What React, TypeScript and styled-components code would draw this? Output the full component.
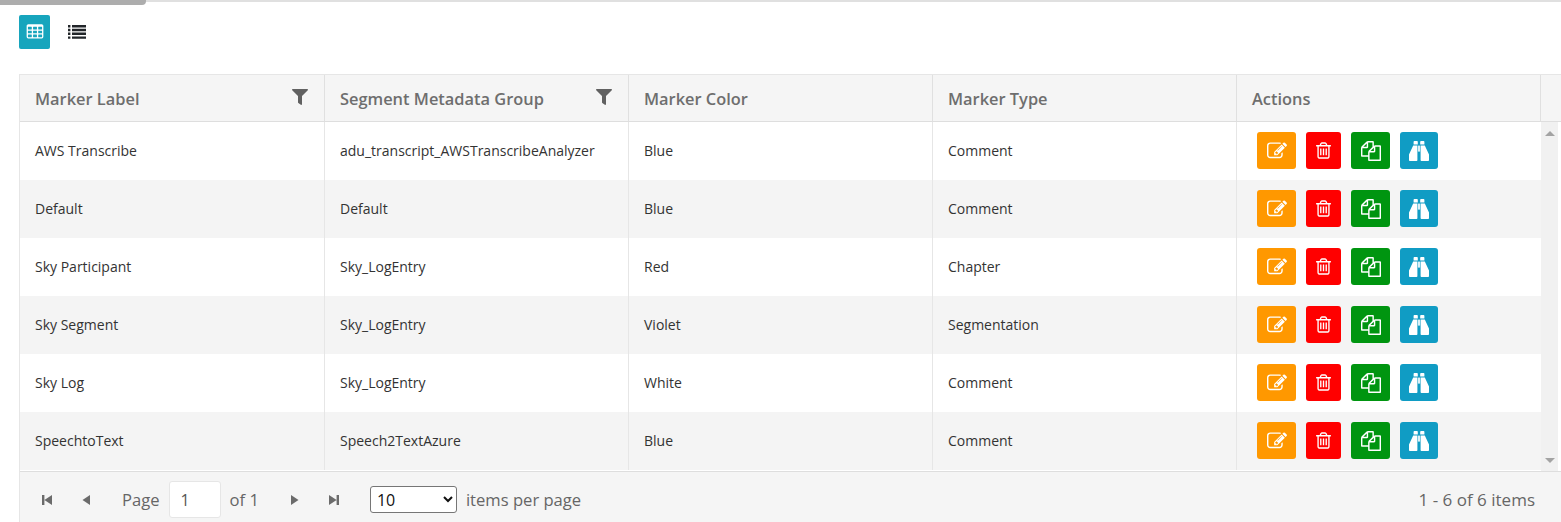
import { createGlobalStyle, styled } from "styled-components";
import { FaFilter } from "react-icons/fa";

interface MarkerRow {
    label: string;
    group: string;
    color: string;
    type: string;
}

const rows: MarkerRow[] = [
    { label: "AWS Transcribe", group: "adu_transcript_AWSTranscribeAnalyzer", color: "Blue", type: "Comment" },
    { label: "Default", group: "Default", color: "Blue", type: "Comment" },
    { label: "Sky Participant", group: "Sky_LogEntry", color: "Red", type: "Chapter" },
    { label: "Sky Segment", group: "Sky_LogEntry", color: "Violet", type: "Segmentation" },
    { label: "Sky Log", group: "Sky_LogEntry", color: "White", type: "Comment" },
    { label: "SpeechtoText", group: "Speech2TextAzure", color: "Blue", type: "Comment" },
];

const icons = {
    edit: "M888 1184l116-116-152-152-116 116v56h96v96h56zm440-720q-16-16-33 1l-350 350q-17 17-1 33t33-1l350-350q17-17 1-33zm80 594v190q0 119-84.5 203.5t-203.5 84.5h-832q-119 0-203.5-84.5t-84.5-203.5v-832q0-119 84.5-203.5t203.5-84.5h832q63 0 117 25 15 7 18 23 3 17-9 29l-49 49q-14 14-32 8-23-6-45-6h-832q-66 0-113 47t-47 113v832q0 66 47 113t113 47h832q66 0 113-47t47-113v-126q0-13 9-22l64-64q15-15 35-7t20 29zm-96-738l288 288-672 672h-288v-288zm444 132l-92 92-288-288 92-92q28-28 68-28t68 28l152 152q28 28 28 68t-28 68z",
    trash: "M704 736v576q0 14-9 23t-23 9h-64q-14 0-23-9t-9-23v-576q0-14 9-23t23-9h64q14 0 23 9t9 23zm256 0v576q0 14-9 23t-23 9h-64q-14 0-23-9t-9-23v-576q0-14 9-23t23-9h64q14 0 23 9t9 23zm256 0v576q0 14-9 23t-23 9h-64q-14 0-23-9t-9-23v-576q0-14 9-23t23-9h64q14 0 23 9t9 23zm128 724v-948h-896v948q0 22 7 40.5t14.5 27 10.5 8.5h832q3 0 10.5-8.5t14.5-27 7-40.5zm-672-1076h448l-48-117q-7-9-17-11h-317q-10 2-17 11zm928 32v64q0 14-9 23t-23 9h-96v948q0 83-47 143.5t-113 60.5h-832q-66 0-113-58.5t-47-141.5v-952h-96q-14 0-23-9t-9-23v-64q0-14 9-23t23-9h309l70-167q15-37 54-63t79-26h320q40 0 79 26t54 63l70 167h309q14 0 23 9t9 23z",
    files: "M1696 384q40 0 68 28t28 68v1216q0 40-28 68t-68 28h-960q-40 0-68-28t-28-68v-288h-544q-40 0-68-28t-28-68v-672q0-40 20-88t48-76l408-408q28-28 76-48t88-20h416q40 0 68 28t28 68v328q68-40 128-40h416zm-544 213l-299 299h299v-299zm-640-384l-299 299h299v-299zm196 647l316-316v-416h-384v416q0 40-28 68t-68 28h-416v640h512v-256q0-40 20-88t48-76zm956 804v-1152h-384v416q0 40-28 68t-68 28h-416v640h896z",
    table: "M576 1376v-192q0-14-9-23t-23-9h-320q-14 0-23 9t-9 23v192q0 14 9 23t23 9h320q14 0 23-9t9-23zm0-384v-192q0-14-9-23t-23-9h-320q-14 0-23 9t-9 23v192q0 14 9 23t23 9h320q14 0 23-9t9-23zm512 384v-192q0-14-9-23t-23-9h-320q-14 0-23 9t-9 23v192q0 14 9 23t23 9h320q14 0 23-9t9-23zm-512-768v-192q0-14-9-23t-23-9h-320q-14 0-23 9t-9 23v192q0 14 9 23t23 9h320q14 0 23-9t9-23zm512 384v-192q0-14-9-23t-23-9h-320q-14 0-23 9t-9 23v192q0 14 9 23t23 9h320q14 0 23-9t9-23zm512 384v-192q0-14-9-23t-23-9h-320q-14 0-23 9t-9 23v192q0 14 9 23t23 9h320q14 0 23-9t9-23zm-512-768v-192q0-14-9-23t-23-9h-320q-14 0-23 9t-9 23v192q0 14 9 23t23 9h320q14 0 23-9t9-23zm512 384v-192q0-14-9-23t-23-9h-320q-14 0-23 9t-9 23v192q0 14 9 23t23 9h320q14 0 23-9t9-23zm0-384v-192q0-14-9-23t-23-9h-320q-14 0-23 9t-9 23v192q0 14 9 23t23 9h320q14 0 23-9t9-23zm128-320v1088q0 66-47 113t-113 47h-1344q-66 0-113-47t-47-113v-1088q0-66 47-113t113-47h1344q66 0 113 47t47 113z",
};

const Glyph = ({ d, size }: { d: string; size: number }) => (
    <svg width={size} height={size} viewBox="0 0 1792 1792" fill="currentColor">
        <path d={d} />
    </svg>
);

const BinocularsIcon = () => (
    <svg width="20" height="20" viewBox="0 0 20 20" fill="currentColor">
        <path d="M4.6 0.8C4.6 0.4 5 0 5.4 0H8C8.4 0 8.8 0.4 8.8 0.8V3.6H4.6ZM11.2 0.8C11.2 0.4 11.6 0 12 0H14.6C15 0 15.4 0.4 15.4 0.8V3.6H11.2Z" />
        <path d="M4.2 4.6H8.4V19.2C8.4 19.6 8 20 7.6 20H0.8C0.4 20 0 19.6 0 19.2V13.6ZM11.6 4.6H15.8L20 13.6V19.2C20 19.6 19.6 20 19.2 20H12.4C12 20 11.6 19.6 11.6 19.2Z" />
        <path d="M8.9 4.6H11.1V10.6H8.9Z" opacity="0.85" />
    </svg>
);

const ListIcon = () => (
    <svg width="18" height="14" viewBox="0 0 18 14" fill="currentColor">
        <path d="M0 0H2.4V2.4H0ZM4 0H18V2.4H4ZM0 3.8H2.4V6.2H0ZM4 3.8H18V6.2H4ZM0 7.6H2.4V10H0ZM4 7.6H18V10H4ZM0 11.4H2.4V13.8H0ZM4 11.4H18V13.8H4Z" />
    </svg>
);

const ActionButtons = () => (
    <Actions>
        <ActionButton $bg="#ff9800" $width={39}><Glyph d={icons.edit} size={20} /></ActionButton>
        <ActionButton $bg="#ff0000" $width={35}><Glyph d={icons.trash} size={19} /></ActionButton>
        <ActionButton $bg="#009510" $width={39}><Glyph d={icons.files} size={20} /></ActionButton>
        <ActionButton $bg="#109cc4" $width={38}><BinocularsIcon /></ActionButton>
    </Actions>
);

export default function App() {
    return (
        <>
            <GlobalStyle />
            <TopLine>
                <TopThumb />
            </TopLine>
            <Page>
                <ViewBar>
                    <ViewButton $active><Glyph d={icons.table} size={18} /></ViewButton>
                    <ViewButton><ListIcon /></ViewButton>
                </ViewBar>
                <Grid>
                    <HeaderRow>
                        <HeaderCell>Marker Label<FilterIcon><FaFilter size={16} /></FilterIcon></HeaderCell>
                        <HeaderCell>Segment Metadata Group<FilterIcon><FaFilter size={16} /></FilterIcon></HeaderCell>
                        <HeaderCell>Marker Color</HeaderCell>
                        <HeaderCell>Marker Type</HeaderCell>
                        <HeaderCell>Actions</HeaderCell>
                        <HeaderSpacer />
                    </HeaderRow>
                    <BodyWrap>
                        <Rows>
                            {rows.map((row, i) => (
                                <Row key={row.label} $alt={i % 2 === 1}>
                                    <Cell>{row.label}</Cell>
                                    <Cell>{row.group}</Cell>
                                    <Cell>{row.color}</Cell>
                                    <Cell>{row.type}</Cell>
                                    <Cell><ActionButtons /></Cell>
                                </Row>
                            ))}
                        </Rows>
                        <ScrollTrack>
                            <ArrowUp />
                            <ArrowDown />
                        </ScrollTrack>
                    </BodyWrap>
                    <Pager>
                        <PagerLeft>
                            <PagerIcons>
                                <PagerGlyph viewBox="0 0 12 12"><path d="M1 1H3.4V11H1ZM11 1V11L3.4 6Z" /></PagerGlyph>
                                <PagerGlyph viewBox="0 0 12 12"><path d="M10 1V11L2.5 6Z" /></PagerGlyph>
                            </PagerIcons>
                            <PagerText>Page</PagerText>
                            <PageInput defaultValue="1" />
                            <PagerText>of 1</PagerText>
                            <PagerIcons>
                                <PagerGlyph viewBox="0 0 12 12"><path d="M2 1V11L9.5 6Z" /></PagerGlyph>
                                <PagerGlyph viewBox="0 0 12 12"><path d="M11 1H8.6V11H11ZM1 1V11L8.6 6Z" /></PagerGlyph>
                            </PagerIcons>
                            <SizeSelect defaultValue="10">
                                <option>10</option>
                                <option>20</option>
                                <option>50</option>
                            </SizeSelect>
                            <PagerText>items per page</PagerText>
                        </PagerLeft>
                        <ItemCount>1 - 6 of 6 items</ItemCount>
                    </Pager>
                </Grid>
            </Page>
        </>
    );
}

const GlobalStyle = createGlobalStyle`
    html, body {
        margin: 0;
        padding: 0;
        height: 522px;
        overflow: hidden;
        background: #fff;
        font-family: "Open Sans", "Liberation Sans", sans-serif;
    }
    * {
        box-sizing: border-box;
    }
`;

const TopLine = styled.div`
    height: 2px;
    background: #e0e0e0;
`;

const TopThumb = styled.div`
    width: 146px;
    height: 5px;
    background: #adadad;
    border-bottom-right-radius: 4px;
`;

const Page = styled.div`
    padding: 13px 0 0 19px;
`;

const ViewBar = styled.div`
    display: flex;
    gap: 11px;
    height: 34px;
    margin-bottom: 25px;
`;

const ViewButton = styled.div<{ $active?: boolean }>`
    width: 31px;
    height: 34px;
    display: flex;
    align-items: center;
    justify-content: center;
    border-radius: 2px;
    background: ${(p) => (p.$active ? "#17a5bd" : "transparent")};
    color: ${(p) => (p.$active ? "#fff" : "#212529")};
`;

const Grid = styled.div`
    border: 1px solid #e6e6e6;
    border-right: none;
    border-bottom: none;
    height: 448px;
    display: flex;
    flex-direction: column;
    color: #333;
`;

const HeaderRow = styled.div`
    display: grid;
    grid-template-columns: 305px 304px 304px 304px 304px 1fr;
    height: 47px;
    background: #f5f5f5;
    border-bottom: 1px solid #dedede;
`;

const HeaderCell = styled.div`
    position: relative;
    display: flex;
    align-items: center;
    padding: 0 15px;
    font-size: 16.4px;
    font-weight: 600;
    color: #6e6e6e;
    border-right: 1px solid #e0e0e0;
`;

const HeaderSpacer = styled.div``;

const FilterIcon = styled.span`
    position: absolute;
    top: 14px;
    right: 16px;
    color: #616161;
    display: flex;
`;

const BodyWrap = styled.div`
    display: flex;
    height: 349px;
`;

const Rows = styled.div`
    width: 1521px;
    flex: none;
`;

const Row = styled.div<{ $alt: boolean }>`
    display: grid;
    grid-template-columns: 305px 304px 304px 304px 304px;
    height: 58px;
    background: ${(p) => (p.$alt ? "#f4f4f4" : "#fff")};
`;

const Cell = styled.div`
    display: flex;
    align-items: center;
    padding: 0 15px 1px;
    font-size: 14px;
    color: #333;
    border-right: 1px solid #e6e6e6;

    &:last-child {
        border-right: none;
    }
`;

const Actions = styled.div`
    display: flex;
    gap: 10px;
    padding-left: 5px;
`;

const ActionButton = styled.div<{ $bg: string; $width: number }>`
    width: ${(p) => p.$width}px;
    height: 37px;
    display: flex;
    align-items: center;
    justify-content: center;
    border-radius: 3px;
    background: ${(p) => p.$bg};
    color: #fff;
`;

const ScrollTrack = styled.div`
    width: 17px;
    background: #f1f1f1;
    display: flex;
    flex-direction: column;
    justify-content: space-between;
    align-items: center;
    padding: 9px 0 8px;
`;

const ArrowUp = styled.div`
    width: 0;
    height: 0;
    border-left: 5px solid transparent;
    border-right: 5px solid transparent;
    border-bottom: 5px solid #a3a3a3;
`;

const ArrowDown = styled.div`
    width: 0;
    height: 0;
    border-left: 5px solid transparent;
    border-right: 5px solid transparent;
    border-top: 5px solid #a3a3a3;
`;

const Pager = styled.div`
    flex: 1;
    display: flex;
    align-items: center;
    justify-content: space-between;
    padding: 5px 26px 0 21px;
    background: #f5f5f5;
    border-top: 1px solid #dedede;
`;

const PagerLeft = styled.div`
    display: flex;
    align-items: center;
    height: 100%;
`;

const PagerIcons = styled.div`
    display: flex;
    gap: 27px;
    margin: 0 30px 0 0;

    &:not(:first-child) {
        margin: 0 30px 0 30px;
    }
`;

const PagerGlyph = styled.svg`
    width: 12px;
    height: 12px;
    fill: #6b6b6b;
`;

const PagerText = styled.span`
    font-size: 16.6px;
    color: #666;
`;

const ItemCount = styled(PagerText)`
    font-size: 17px;
`;

const PageInput = styled.input`
    width: 52px;
    height: 37px;
    margin: 0 9px;
    padding: 0 11px;
    border: 1px solid #e6e6e6;
    border-radius: 3px;
    background: #fff;
    font: inherit;
    font-size: 16px;
    color: #555;
    outline: none;
`;

const SizeSelect = styled.select`
    width: 87px;
    height: 27px;
    margin-right: 9px;
    padding-left: 2px;
    border: 1px solid #767676;
    border-radius: 3px;
    background: #fff;
    font-family: inherit;
    font-size: 16px;
    color: #111;
`;
